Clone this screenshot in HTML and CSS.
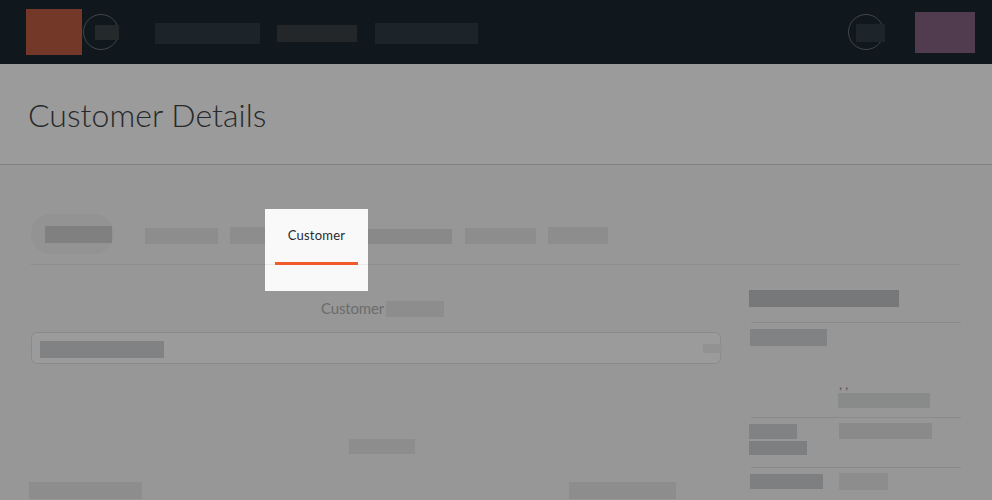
FILE: index.html
```html
<!DOCTYPE html>
<html lang="en">
<head>
<meta charset="utf-8">
<title>Customer Details</title>
<link rel="stylesheet" href="styles.css">
</head>
<body>
<header class="topbar">
  <div class="logo"></div>
  <div class="ring"><span class="ring-bar"></span></div>
  <nav class="nav"><span class="nav-bar nav-a"></span><span class="nav-bar nav-b"></span><span class="nav-bar nav-c"></span></nav>
  <div class="ring ring-right"><span class="ring-bar"></span></div>
  <div class="account"></div>
</header>
<section class="title"><h1>Customer Details</h1></section>
<div class="tabs">
  <div class="pill"><span class="bar dark"></span></div>
  <span class="bar tab-a"></span>
  <span class="bar tab-b"></span>
  <div class="active"><div class="spotlight"><span class="label">Customer</span><span class="underline"></span></div></div>
  <span class="bar tab-c"></span>
  <span class="bar tab-d"></span>
  <span class="bar tab-e"></span>
</div>
<div class="content">
  <main class="main">
    <h2><span class="head-text">Customer</span><span class="bar head-bar"></span></h2>
    <div class="field"><span class="bar slate field-value"></span><span class="bar field-action"></span></div>
    <div class="bar caption"></div>
    <div class="columns"><span class="bar col-a"></span><span class="bar col-b"></span></div>
  </main>
  <aside class="side">
    <div class="side-head"><span class="bar heading"></span></div>
    <div class="row address">
      <span class="bar slate key-a"></span>
      <div class="value"><span class="commas">, ,</span><span class="bar address-bar"></span></div>
    </div>
    <div class="row contact">
      <div class="keys"><span class="bar slate key-b"></span><span class="bar slate key-c"></span></div>
      <span class="bar value-b"></span>
    </div>
    <div class="row last"><span class="bar slate key-d"></span><span class="bar value-c"></span></div>
  </aside>
</div>
</body>
</html>
```
FILE: styles.css
```css
* { box-sizing: border-box; }
body { margin: 0; height: 500px; overflow: hidden; background: #979797; font-family: Lato, sans-serif; }
h1, h2 { margin: 0; }
.bar { display: block; flex: none; background: #8d8d8d; }
.slate { background: #808283; }
.dark { background: #808080; }

.topbar { display: flex; align-items: flex-start; height: 64px; padding: 0 17px 0 26px; background: #10181d; }
.logo { width: 56px; height: 46px; margin-top: 9px; background: #733828; }
.ring { width: 36px; height: 36px; margin: 14px 0 0 1px; padding: 10px 0 0 11px; border: 1px solid #42474a; border-radius: 50%; }
.ring-bar { display: block; width: 24px; height: 15px; background: #24292b; }
.nav { display: flex; margin-left: 36px; }
.nav-bar { height: 21px; margin-top: 23px; background: #1c2329; }
.nav-a { width: 105px; }
.nav-b { width: 80px; height: 17px; margin: 25px 18px 0 17px; background: #23272a; }
.nav-c { width: 103px; background: #1d2429; }
.ring-right { margin-left: auto; padding: 9px 0 0 7px; }
.ring-right .ring-bar { width: 29px; height: 18px; background: #1e252a; }
.account { width: 60px; height: 41px; margin: 12px 0 0 31px; background: #503c4e; }

.title { height: 101px; padding: 31px 28px 0; background: #9b9b9b; border-bottom: 1px solid #828282; }
h1 { color: #27292b; font-size: 32px; font-weight: 300; line-height: 40px; letter-spacing: 0.03px; }

.tabs { display: flex; align-items: flex-start; width: 929px; height: 100px; margin-left: 31px; padding-top: 49px; border-bottom: 1px solid #8c8c8c; }
.pill { width: 83px; height: 40px; padding: 12px 0 0 14px; border-radius: 20px; background: #939393; }
.pill .bar { width: 67px; height: 17px; }
.tab-a { width: 73px; height: 16px; margin: 14px 12px 0 31px; }
.tab-b { width: 35px; height: 17px; margin-top: 13px; }
.active { position: relative; width: 103px; height: 40px; }
.spotlight { position: absolute; top: -5px; left: 0; width: 103px; height: 82px; padding-top: 16px; background: linear-gradient(#f9f9f9 55px, #eaeaea 55px, #eaeaea 56px, #f9f9f9 56px); }
.label { display: block; color: #252a30; font-size: 13px; line-height: 20px; letter-spacing: 0.2px; text-align: center; }
.underline { display: block; width: 83px; height: 3px; margin: 17px 0 0 10px; background: #f15b2b; }
.tab-c { width: 84px; height: 15px; margin-top: 15px; background: #898989; }
.tab-d { width: 71px; height: 16px; margin: 14px 12px 0 13px; }
.tab-e { width: 60px; height: 17px; margin-top: 13px; }

.content { display: grid; grid-template-columns: 690px 212px; column-gap: 28px; padding-left: 31px; }
h2 { display: flex; height: 67px; padding: 33px 0 0 290px; color: #6c6c6c; font-size: 15px; font-weight: 400; line-height: 20px; letter-spacing: -0.15px; }
.head-text { width: 65px; }
.head-bar { width: 58px; height: 16px; margin-top: 3px; }
.field { display: flex; justify-content: space-between; height: 32px; padding: 8px 0 0 8px; border: 1px solid #8a8a8a; border-radius: 6px; background: #9b9b9b; }
.field-value { width: 124px; height: 17px; }
.field-action { width: 19px; height: 9px; margin: 3px -2px 0 0; background: #929292; }
.caption { width: 66px; height: 15px; margin: 75px 0 0 318px; }
.columns { display: flex; gap: 427px; margin: 28px 0 0 -2px; }
.col-a { width: 113px; height: 17px; }
.col-b { width: 107px; height: 17px; }

.side-head { height: 58px; padding-top: 25px; }
.heading { width: 150px; height: 17px; background: #77787a; }
.row { display: grid; grid-template-columns: 88px 1fr; align-items: start; margin-left: 2px; width: 210px; border-top: 1px solid #8a8a8a; margin-top: -1px; }
.address { height: 96px; padding-top: 6px; }
.key-a { width: 77px; height: 17px; margin-left: -1px; }
.value { padding-top: 47px; }
.commas { display: block; height: 17px; color: #505050; font-size: 13px; line-height: 16px; }
.address-bar { width: 92px; height: 15px; margin-left: -1px; background: #898b8a; }
.contact { height: 51px; padding-top: 5px; }
.keys { display: grid; gap: 2px; margin: 1px 0 0 -2px; }
.key-b { width: 48px; height: 15px; }
.key-c { width: 58px; height: 14px; background: #7d7f80; }
.value-b { width: 93px; height: 16px; background: #8a8a8a; }
.last { padding-top: 5px; }
.key-d { width: 73px; height: 15px; margin: 1px 0 0 -1px; background: #7d7f80; }
.value-c { width: 49px; height: 17px; }
```
